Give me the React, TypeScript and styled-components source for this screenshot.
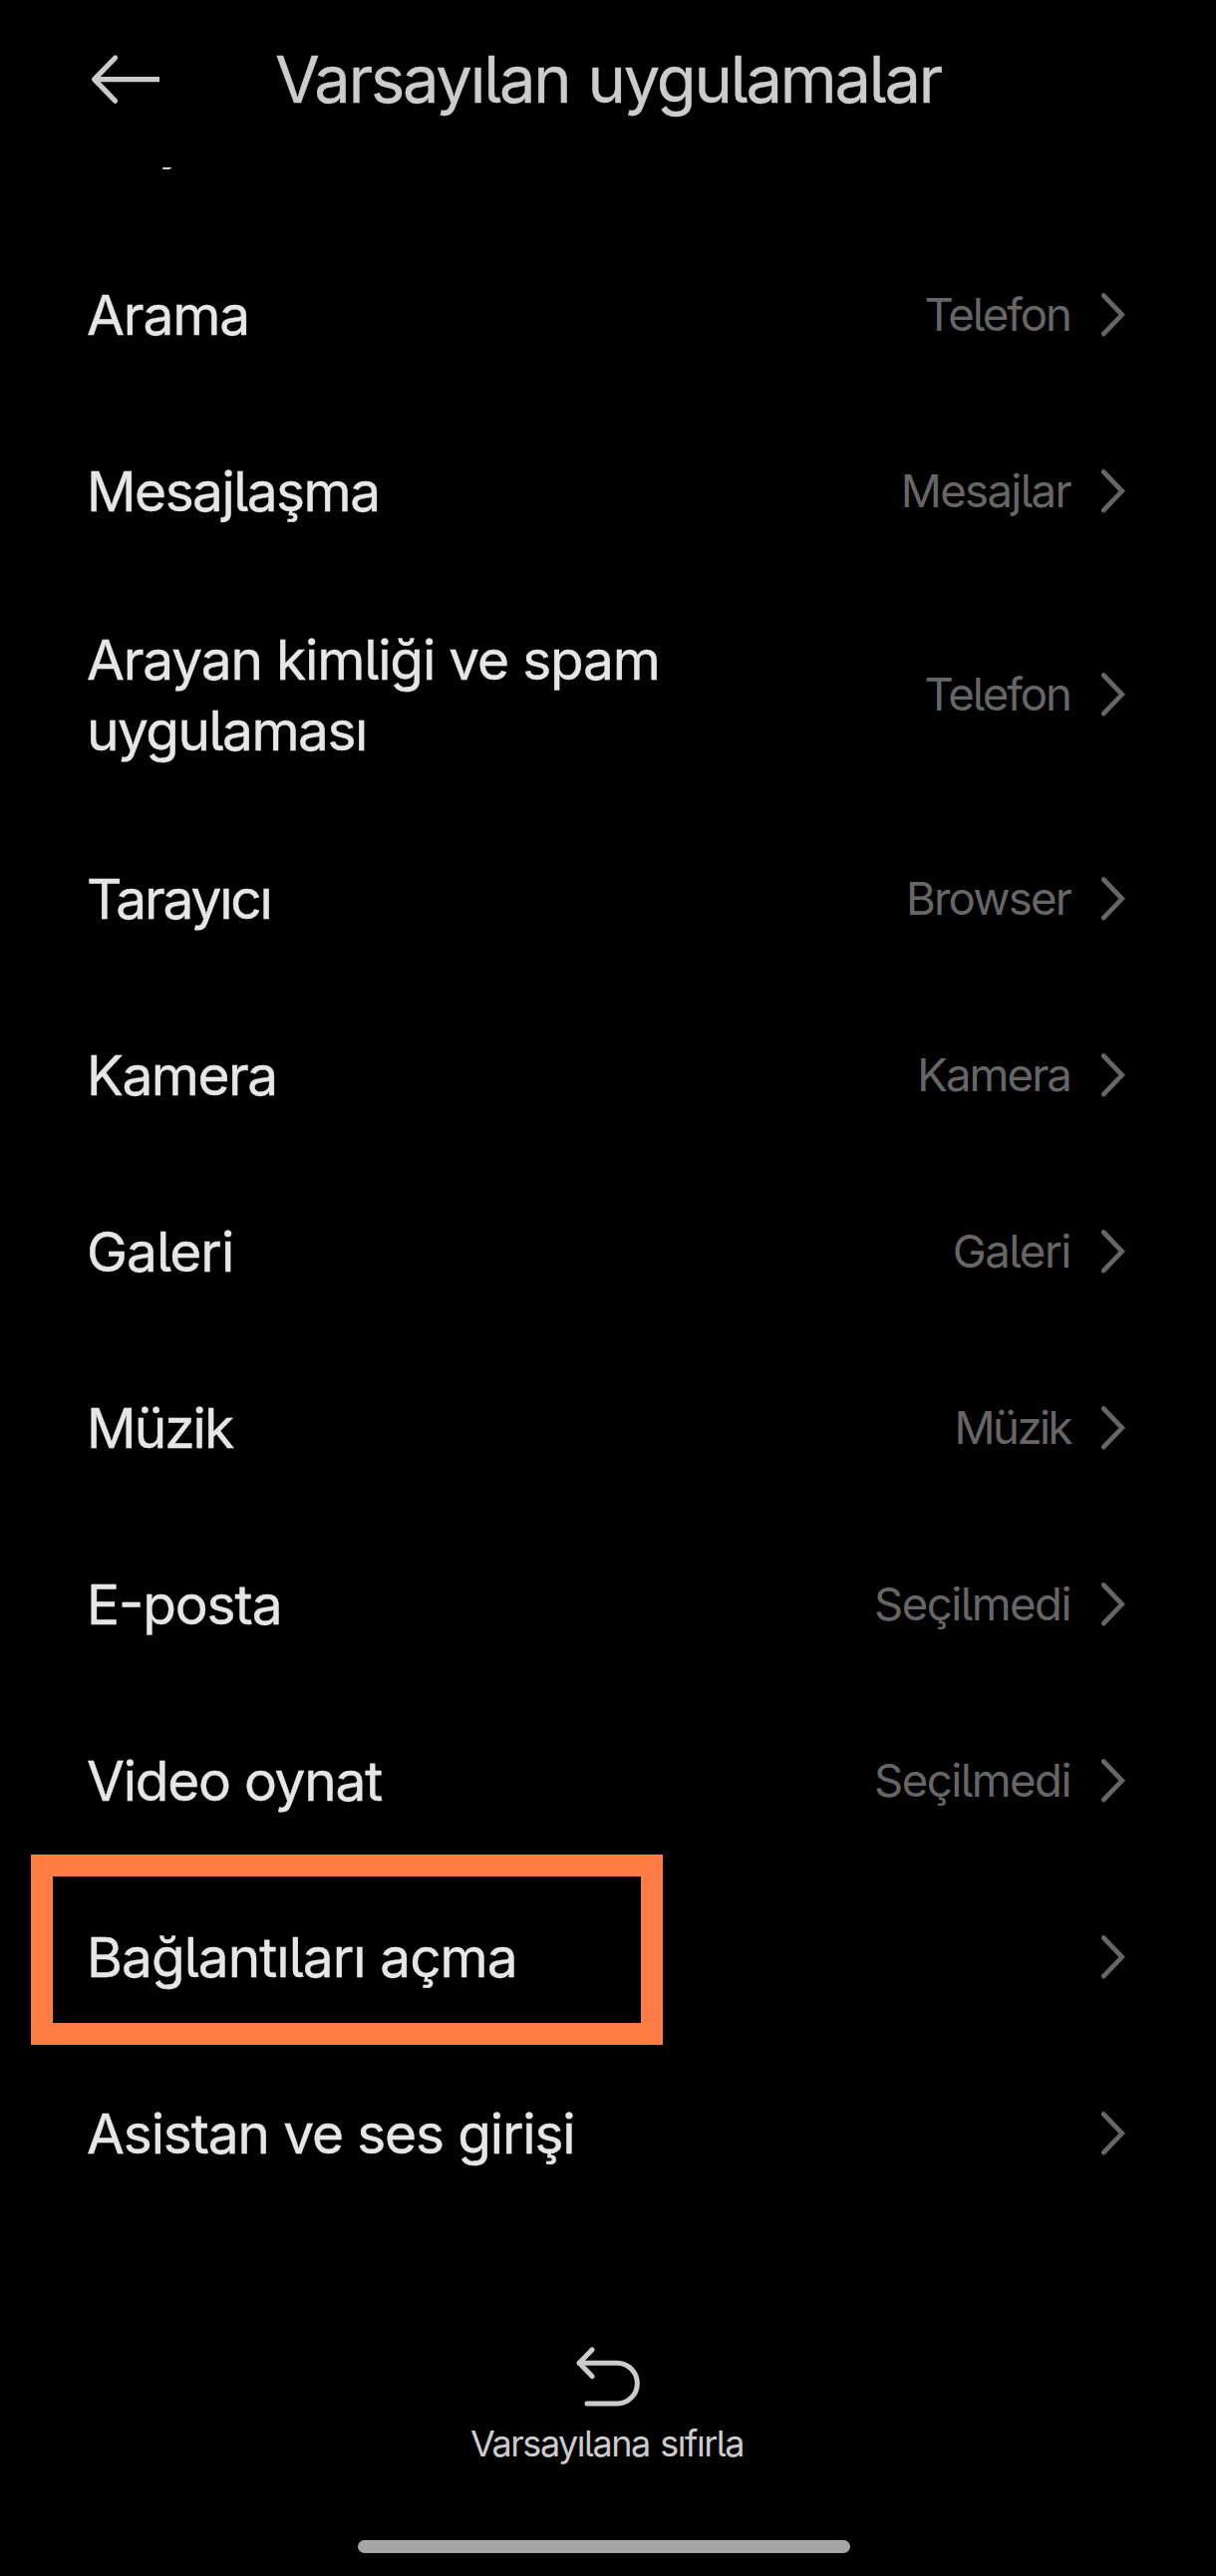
import React from 'react';
import styled, { createGlobalStyle } from 'styled-components';

const GlobalStyle = createGlobalStyle`
  body { margin: 0; background: #000; }
  * { box-sizing: border-box; }
`;

const Screen = styled.div`
  display: flex;
  flex-direction: column;
  width: 1220px;
  height: 2585px;
  overflow: hidden;
  background: #000;
  font-family: Inter, 'Noto Sans', sans-serif;
  font-feature-settings: 'cv05' 1, 'case' 1;
`;

const Header = styled.header`
  display: grid;
  grid-template-columns: 1fr auto 1fr;
  align-items: center;
  flex: none;
  height: 168px;
  padding: 0 89px 9px;
`;

const BackButton = styled.button`
  display: flex;
  width: 74px;
  padding: 0;
  border: 0;
  background: none;
  color: #ccc;
`;

const Title = styled.h1`
  margin: 0;
  font-size: 65px;
  font-weight: 400;
  line-height: 80px;
  letter-spacing: -2.2px;
  word-spacing: 2px;
  color: #ccc;
  white-space: nowrap;
  -webkit-text-stroke: 0.3px #ccc;
`;

const Viewport = styled.main`
  flex: none;
  height: 2061px;
  overflow: hidden;
`;

/* The list is scrolled so that its first entry sits under the header. */
const List = styled.ul`
  list-style: none;
  margin: -118px 0 0;
  padding: 0;
`;

const Row = styled.li`
  position: relative;
  display: flex;
  align-items: center;
  justify-content: space-between;
  min-height: 177px;
  padding: 44px 91px 44px 87px;
`;

const Label = styled.span<{ $tracking: number }>`
  padding-top: 2px;
  font-size: 55px;
  line-height: 71px;
  letter-spacing: ${p => p.$tracking}px;
  color: #e6e6e6;
  -webkit-text-stroke: 0.4px #e6e6e6;
`;

const Line = styled.span<{ $tracking: number }>`
  display: block;
  letter-spacing: ${p => p.$tracking}px;
`;

const Trailing = styled.span`
  display: flex;
  align-items: center;
  gap: 31px;
`;

const Value = styled.span<{ $tracking: number }>`
  font-size: 45.5px;
  line-height: 60px;
  letter-spacing: ${p => p.$tracking}px;
  color: #666;
`;

const ChevronIcon = styled.svg`
  flex: none;
  width: 24px;
  height: 44px;
`;

const Highlight = styled.span`
  position: absolute;
  left: 31px;
  top: -14px;
  width: 634px;
  height: 191px;
  border: 22px solid #ff7c45;
  pointer-events: none;
`;

const Footer = styled.footer`
  display: flex;
  flex: 1;
  flex-direction: column;
  align-items: center;
  padding-top: 124px;
`;

const ResetButton = styled.button`
  display: flex;
  flex-direction: column;
  align-items: center;
  gap: 13px;
  padding: 0;
  border: 0;
  background: none;
  color: #ccc;
  font-family: inherit;
  font-feature-settings: inherit;
`;

const ResetLabel = styled.span`
  padding-right: 2px;
  font-size: 36px;
  line-height: 44px;
  letter-spacing: -1.49px;
  word-spacing: 2px;
`;

const HomeBar = styled.div`
  width: 494px;
  height: 13px;
  margin: auto 8px 23px 0;
  border-radius: 7px;
  background: #a6a6a6;
`;

type Part = [text: string, tracking: number];
interface Entry {
  label: Part[];
  value?: Part;
  highlighted?: boolean;
}

const entries: Entry[] = [
  { label: [['Başlatıcı', -1.1]] },
  { label: [['Arama', -1.12]], value: ['Telefon', -1.98] },
  { label: [['Mesajlaşma', -1.56]], value: ['Mesajlar', -1.65] },
  { label: [['Arayan kimliği ve spam', -1.17], ['uygulaması', -1.53]], value: ['Telefon', -1.98] },
  { label: [['Tarayıcı', -2.17]], value: ['Browser', -1.8] },
  { label: [['Kamera', -1.53]], value: ['Kamera', -1.92] },
  { label: [['Galeri', -1.0]], value: ['Galeri', -1.4] },
  { label: [['Müzik', -2.0]], value: ['Müzik', -2.5] },
  { label: [['E-posta', -1.11]], value: ['Seçilmedi', -1.5] },
  { label: [['Video oynat', -1.25]], value: ['Seçilmedi', -1.5] },
  { label: [['Bağlantıları açma', -0.97]], highlighted: true },
  { label: [['Asistan ve ses girişi', -1.15]] },
];

function Chevron() {
  return (
    <ChevronIcon viewBox="0 0 24 44" fill="none" stroke="#666" strokeWidth="4.7" strokeLinecap="round">
      <path d="M2.2 2.5L20.7 21.8L2.2 41.1" strokeLinejoin="miter" />
    </ChevronIcon>
  );
}

function EntryRow({ label, value, highlighted }: Entry) {
  return (
    <Row>
      <Label $tracking={label[0][1]}>
        {label.length === 1
          ? label[0][0]
          : label.map(([text, tracking]) => (
              <Line key={text} $tracking={tracking}>{text}</Line>
            ))}
      </Label>
      <Trailing>
        {value && <Value $tracking={value[1]}>{value[0]}</Value>}
        <Chevron />
      </Trailing>
      {highlighted && <Highlight />}
    </Row>
  );
}

export default function App() {
  return (
    <Screen>
      <GlobalStyle />
      <Header>
        <BackButton aria-label="Geri">
          <svg width="74" height="52" viewBox="0 0 74 52" fill="none" stroke="currentColor" strokeWidth="5.2" strokeLinecap="round" strokeLinejoin="round">
            <path d="M26.6 4L5.6 25.6L26.6 47.2" />
            <path d="M5.6 25.6H71" strokeLinecap="butt" />
          </svg>
        </BackButton>
        <Title>Varsayılan uygulamalar</Title>
      </Header>
      <Viewport>
        <List>
          {entries.map(entry => (
            <EntryRow key={entry.label[0][0]} {...entry} />
          ))}
        </List>
      </Viewport>
      <Footer>
        <ResetButton>
          <svg width="64" height="64" viewBox="0 0 64 64" fill="none" stroke="currentColor" strokeWidth="5" strokeLinecap="round" strokeLinejoin="round">
            <path d="M16 5L3.2 18.3L16 31.6" />
            <path d="M3.2 18.3H41A20.35 20.35 0 0 1 41 59H11" />
          </svg>
          <ResetLabel>Varsayılana sıfırla</ResetLabel>
        </ResetButton>
        <HomeBar />
      </Footer>
    </Screen>
  );
}
